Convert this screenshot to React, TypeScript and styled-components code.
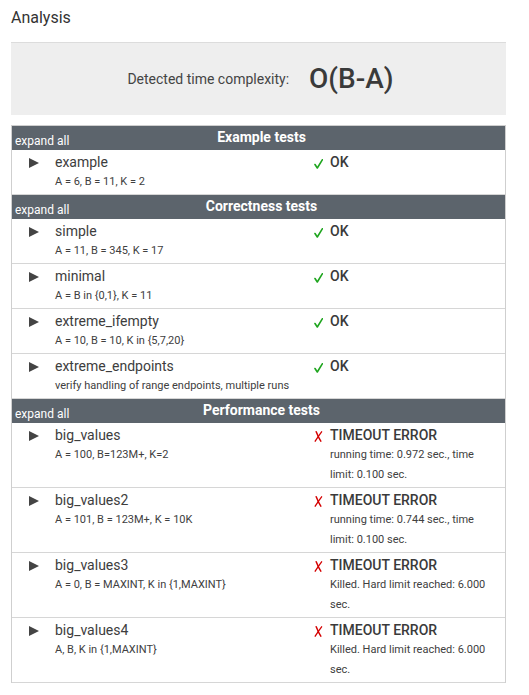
import React from "react";
import styled, { createGlobalStyle } from "styled-components";

const GlobalStyle = createGlobalStyle`
  html, body { margin: 0; padding: 0; background: #fff; }
  body { font-family: Roboto, "Liberation Sans", sans-serif; color: #333; }
  * { box-sizing: border-box; }
`;

const Page = styled.div`
  width: 495px;
  margin-left: 11px;
  padding-top: 8px;
  padding-bottom: 12px;
`;

const Title = styled.h2`
  margin: 0 0 14px 0;
  font-size: 16px;
  line-height: 20px;
  font-weight: 400;
  color: #333;
`;

const ComplexityBox = styled.div`
  height: 73px;
  border-top: 1px solid #dcdcdc;
  background: #eeeeee;
  display: flex;
  align-items: center;
  justify-content: center;
  gap: 20px;
  margin-bottom: 10px;
`;

const ComplexityLabel = styled.span`
  font-size: 14px;
  color: #444;
  padding-left: 4px;
`;

const ComplexityValue = styled.span`
  font-size: 28px;
  font-weight: 500;
  color: #3a3a3a;
  line-height: 34px;
`;

const Table = styled.div`
  border: 1px solid #cfcfcf;
  border-bottom: none;
`;

const GroupHeader = styled.div`
  height: 24px;
  background: #5c646c;
  color: #fff;
  display: grid;
  grid-template-columns: 1fr auto 1fr;
`;

const ExpandAll = styled.span`
  align-self: end;
  font-size: 12px;
  line-height: 16px;
  padding: 0 0 1px 3px;
`;

const GroupTitle = styled.span`
  font-size: 14px;
  font-weight: 700;
  line-height: 20px;
  padding-top: 1px;
  padding-left: 6px;
`;

const Row = styled.div`
  display: grid;
  grid-template-columns: 43px 258px 17px 1fr;
  padding: 2px 15px 2px 0;
  border-bottom: 1px solid #d6d6d6;
`;

const ArrowCell = styled.div`
  height: 20px;
  display: flex;
  align-items: center;
  padding-left: 17px;
  padding-top: 2px;
`;

const NameCell = styled.div`
  display: flex;
  flex-direction: column;
`;

const TestName = styled.span`
  font-size: 14px;
  line-height: 20px;
  color: #3d3d3d;
`;

const Small = styled.span`
  font-size: 11px;
  line-height: 20px;
  color: #404040;
`;

const StatusIcon = styled.span<{ $ok: boolean }>`
  height: 20px;
  display: flex;
  align-items: center;
  padding-top: 3px;
  padding-left: 1px;
  color: ${(p) => (p.$ok ? "#1ea51e" : "#d40000")};
`;

const StatusCell = styled.div`
  display: flex;
  flex-direction: column;
`;

const StatusTitle = styled.span`
  font-size: 14px;
  font-weight: 500;
  line-height: 20px;
  color: #3a3a3a;
`;

type Test = { name: string; params: string; ok: boolean; detail?: string };
type Group = { title: string; tests: Test[] };

const groups: Group[] = [
  {
    title: "Example tests",
    tests: [{ name: "example", params: "A = 6, B = 11, K = 2", ok: true }],
  },
  {
    title: "Correctness tests",
    tests: [
      { name: "simple", params: "A = 11, B = 345, K = 17", ok: true },
      { name: "minimal", params: "A = B in {0,1}, K = 11", ok: true },
      { name: "extreme_ifempty", params: "A = 10, B = 10, K in {5,7,20}", ok: true },
      { name: "extreme_endpoints", params: "verify handling of range endpoints, multiple runs", ok: true },
    ],
  },
  {
    title: "Performance tests",
    tests: [
      { name: "big_values", params: "A = 100, B=123M+, K=2", ok: false, detail: "running time: 0.972 sec., time limit: 0.100 sec." },
      { name: "big_values2", params: "A = 101, B = 123M+, K = 10K", ok: false, detail: "running time: 0.744 sec., time limit: 0.100 sec." },
      { name: "big_values3", params: "A = 0, B = MAXINT, K in {1,MAXINT}", ok: false, detail: "Killed. Hard limit reached: 6.000 sec." },
      { name: "big_values4", params: "A, B, K in {1,MAXINT}", ok: false, detail: "Killed. Hard limit reached: 6.000 sec." },
    ],
  },
];

const Arrow = () => (
  <svg width="10" height="10" viewBox="0 0 10 10">
    <polygon points="0,0 10,5 0,10" fill="#444" />
  </svg>
);

const Check = () => (
  <svg width="9" height="10" viewBox="0 0 9 10">
    <path d="M1 5.5 L3.3 9 L8.3 0.8" fill="none" stroke="#1ea51e" strokeWidth="1.6" strokeLinecap="round" strokeLinejoin="round" />
  </svg>
);

const Cross = () => (
  <svg width="9" height="11" viewBox="0 0 9 11">
    <path d="M2.2 0.8 C3.5 4 5 7.5 6.8 10.2" fill="none" stroke="#d40000" strokeWidth="1.5" strokeLinecap="round" />
    <path d="M7.6 0.8 C5.5 3.5 3.2 7 1.2 10.2" fill="none" stroke="#d40000" strokeWidth="1.3" strokeLinecap="round" />
  </svg>
);

export default function App() {
  return (
    <>
      <GlobalStyle />
      <Page>
        <Title>Analysis</Title>
        <ComplexityBox>
          <ComplexityLabel>Detected time complexity:</ComplexityLabel>
          <ComplexityValue>O(B-A)</ComplexityValue>
        </ComplexityBox>
        <Table>
          {groups.map((g) => (
            <React.Fragment key={g.title}>
              <GroupHeader>
                <ExpandAll>expand all</ExpandAll>
                <GroupTitle>{g.title}</GroupTitle>
                <span />
              </GroupHeader>
              {g.tests.map((t) => (
                <Row key={t.name}>
                  <ArrowCell>
                    <Arrow />
                  </ArrowCell>
                  <NameCell>
                    <TestName>{t.name}</TestName>
                    <Small>{t.params}</Small>
                  </NameCell>
                  <StatusIcon $ok={t.ok}>{t.ok ? <Check /> : <Cross />}</StatusIcon>
                  <StatusCell>
                    <StatusTitle>{t.ok ? "OK" : "TIMEOUT ERROR"}</StatusTitle>
                    {t.detail && <Small>{t.detail}</Small>}
                  </StatusCell>
                </Row>
              ))}
            </React.Fragment>
          ))}
        </Table>
      </Page>
    </>
  );
}
